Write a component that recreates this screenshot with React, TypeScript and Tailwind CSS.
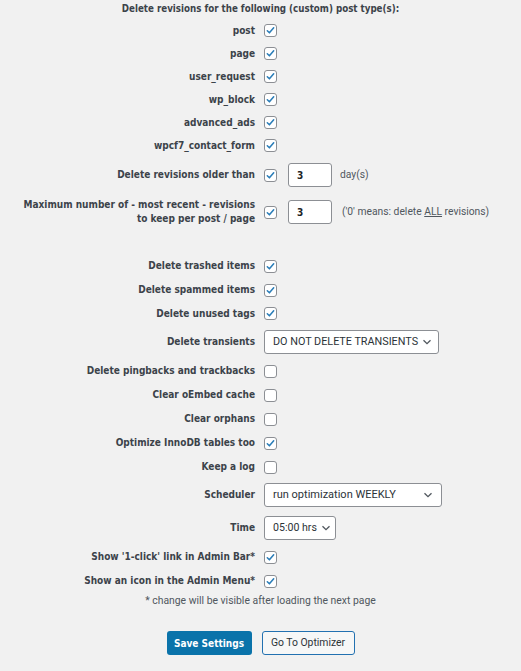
import React from 'react';

const LABEL_FONT = { fontFamily: '"DejaVu Sans Condensed", "DejaVu Sans", Verdana, sans-serif' };
const BODY_FONT = { fontFamily: 'Roboto, "Open Sans", sans-serif' };

function Checkbox({ checked }: { checked: boolean }) {
  return (
    <span className="flex h-[13px] w-[13px] shrink-0 items-center justify-center rounded-[3px] border border-[#8c8f94] bg-white">
      {checked && (
        <svg width="11" height="11" viewBox="0 0 20 20" className="block">
          <path d="M4.2 10.4 L8 14.2 L15.8 5.2" fill="none" stroke="#2a7db8" strokeWidth="2.8" strokeLinecap="round" strokeLinejoin="round" />
        </svg>
      )}
    </span>
  );
}

function Chevron() {
  return (
    <svg width="10" height="10" viewBox="0 0 10 10" className="shrink-0">
      <path d="M1.5 3.2 L5 6.7 L8.5 3.2" fill="none" stroke="#50575e" strokeWidth="1.3" />
    </svg>
  );
}

function Select({ value, width, size, pad }: { value: string; width: string; size: string; pad: string }) {
  return (
    <div
      className={`flex h-[24px] items-center justify-between gap-[4px] rounded-[3px] border border-[#8c8f94] bg-white pl-[8px] text-[#2c3338] ${width} ${size} ${pad}`}
      style={BODY_FONT}
    >
      <span className="whitespace-nowrap">{value}</span>
      <Chevron />
    </div>
  );
}

function NumberBox({ value }: { value: string }) {
  return (
    <div className="ml-[11px] flex h-[24px] w-[44px] items-center rounded-[3px] border border-[#8c8f94] bg-white pl-[8px] text-[10px] font-bold text-[#1d2327]" style={LABEL_FONT}>
      {value}
    </div>
  );
}

function Row({ label, h, children }: { label: React.ReactNode; h: string; children: React.ReactNode }) {
  return (
    <div className={`flex items-center ${h}`}>
      <div className="w-[255px] shrink-0 whitespace-nowrap text-right text-[10px] font-bold leading-[14px] text-[#3c434a]" style={LABEL_FONT}>
        {label}
      </div>
      <div className="ml-[9px] flex items-center">{children}</div>
    </div>
  );
}

const postTypes = ['post', 'page', 'user_request', 'wp_block', 'advanced_ads', 'wpcf7_contact_form'];

export default function App() {
  return (
    <div className="min-h-[671px] w-full bg-[#f1f1f1]">
      <div className="flex h-[18px] items-center justify-center text-[9.7px] font-bold text-[#3c434a]" style={LABEL_FONT}>
        Delete revisions for the following (custom) post type(s):
      </div>
      <div className="h-[1px]" />
      {postTypes.map((t) => (
        <Row key={t} label={t} h="h-[23px]">
          <Checkbox checked />
        </Row>
      ))}
      <Row label="Delete revisions older than" h="h-[36px]">
        <Checkbox checked />
        <NumberBox value="3" />
        <span className="ml-[8px] text-[10.3px] text-[#50575e]" style={BODY_FONT}>day(s)</span>
      </Row>
      <Row
        label={
          <>
            Maximum number of - most recent - revisions
            <br />
            to keep per post / page
          </>
        }
        h="h-[38px]"
      >
        <Checkbox checked />
        <NumberBox value="3" />
        <span className="ml-[10px] whitespace-nowrap text-[10.3px] text-[#50575e]" style={BODY_FONT}>
          ('0' means: delete <span className="underline">ALL</span> revisions)
        </span>
      </Row>
      <div className="h-[23px]" />
      <Row label="Delete trashed items" h="h-[24px]"><Checkbox checked /></Row>
      <Row label="Delete spammed items" h="h-[24px]"><Checkbox checked /></Row>
      <Row label="Delete unused tags" h="h-[23px]"><Checkbox checked /></Row>
      <Row label="Delete transients" h="h-[34px]">
        <Select value="DO NOT DELETE TRANSIENTS" width="w-[175px]" size="text-[10.8px]" pad="pr-[7px]" />
      </Row>
      <Row label="Delete pingbacks and trackbacks" h="h-[24px]"><Checkbox checked={false} /></Row>
      <Row label="Clear oEmbed cache" h="h-[24px]"><Checkbox checked={false} /></Row>
      <Row label="Clear orphans" h="h-[24px]"><Checkbox checked={false} /></Row>
      <Row label="Optimize InnoDB tables too" h="h-[24px]"><Checkbox checked /></Row>
      <Row label="Keep a log" h="h-[24px]"><Checkbox checked={false} /></Row>
      <Row label="Scheduler" h="h-[32px]">
        <Select value="run optimization WEEKLY" width="w-[178px]" size="text-[11px]" pad="pr-[8px]" />
      </Row>
      <Row label="Time" h="h-[33px]">
        <Select value="05:00 hrs" width="w-[72px]" size="text-[10.6px]" pad="pr-[5px]" />
      </Row>
      <Row label="Show '1-click' link in Admin Bar*" h="h-[26px]"><Checkbox checked /></Row>
      <Row label="Show an icon in the Admin Menu*" h="h-[22px]"><Checkbox checked /></Row>
      <div className="flex h-[18px] items-center justify-center text-[10.4px] text-[#50575e]" style={BODY_FONT}>
        * change will be visible after loading the next page
      </div>
      <div className="mt-[21px] flex justify-center gap-[10px]">
        <button className="h-[24px] w-[85px] whitespace-nowrap rounded-[3px] bg-[#0a73aa] text-[10px] font-bold text-white" style={LABEL_FONT}>
          Save Settings
        </button>
        <button className="h-[24px] w-[93px] whitespace-nowrap rounded-[3px] border border-[#2271b1] bg-[#f6f7f7] text-[10.4px] text-[#2c3338]" style={BODY_FONT}>
          Go To Optimizer
        </button>
      </div>
    </div>
  );
}
